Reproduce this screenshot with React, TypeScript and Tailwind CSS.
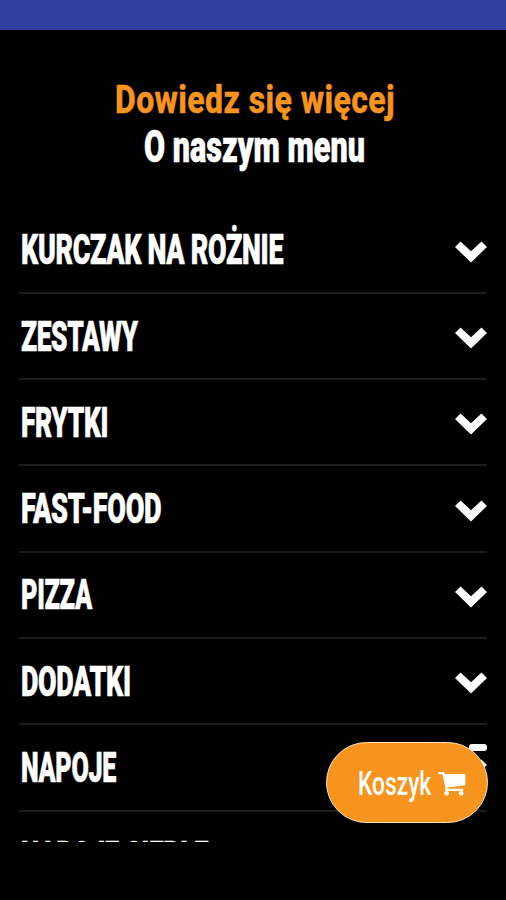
import { useLayoutEffect, useRef, useState } from 'react'

type FitTextProps = {
  text: string
  width: number
  className: string
}

// Condenses a line of text so that it takes exactly the given width.
function FitText({ text, width, className }: FitTextProps) {
  const ref = useRef<HTMLSpanElement>(null)
  const [scale, setScale] = useState(0.6)

  useLayoutEffect(() => {
    if (ref.current) setScale(width / ref.current.offsetWidth)
  }, [width, text])

  return (
    <span className="block" style={{ width }}>
      <span
        ref={ref}
        className={`inline-block origin-left whitespace-nowrap ${className}`}
        style={{ transform: `scaleX(${scale})` }}
      >
        {text}
      </span>
    </span>
  )
}

const categories = [
  { name: 'KURCZAK NA ROŻNIE', width: 262 },
  { name: 'ZESTAWY', width: 117 },
  { name: 'FRYTKI', width: 87 },
  { name: 'FAST-FOOD', width: 140 },
  { name: 'PIZZA', width: 71 },
  { name: 'DODATKI', width: 110 },
  { name: 'NAPOJE', width: 95 },
  { name: 'NAPOJE CIEPŁE', width: 187 },
]

function Chevron() {
  return (
    <svg className="mt-[4px] h-[22px] w-8 shrink-0" viewBox="0 0 32 22" fill="#fff">
      <path d="M5.5 0.5 16 10.2 26.5 0.5 32 6 16 21.5 0 6Z" />
    </svg>
  )
}

function CartIcon() {
  return (
    <svg className="h-6 w-7" viewBox="0 0 28 24" fill="#fff">
      <path d="M0 .8Q0 0 1 0H5.2Q6.4 0 6.8 2H27.3V12.6Q27.3 13.4 26.4 13.5L9.2 15.4 9.4 16.8H25.2V19H7.2L7.4 15.4 4.4 2.3H1Q0 2.3 0 .8Z" />
      <circle cx="8.6" cy="21.3" r="2.4" />
      <circle cx="23.2" cy="21.3" r="2.4" />
    </svg>
  )
}

export default function App() {
  return (
    <div className="relative h-[900px] w-[506px] overflow-hidden bg-black font-['Roboto','Liberation_Sans',sans-serif] text-white">
      <header className="h-[30px] bg-[#303f9f]" />

      <main className="h-[812px] overflow-hidden px-[19px]">
        <div className="flex h-[177.6px] flex-col items-center pt-[46px] pl-[3px]">
          <h1 className="h-12">
            <FitText
              text="Dowiedz się więcej"
              width={280}
              className="text-[38px] leading-[48px] font-extrabold tracking-[0.5px] text-[#f7941d] [-webkit-text-stroke:0.4px_#f7941d]"
            />
          </h1>
          <h2 className="h-12">
            <FitText
              text="O naszym menu"
              width={221}
              className="text-[44px] leading-[47px] font-black [-webkit-text-stroke:0.6px_#fff]"
            />
          </h2>
        </div>

        <ul>
          {categories.map((category, index) => (
            <li
              key={category.name}
              className={`flex h-[86.3px] items-center justify-between border-b-[2px] border-[#1b1b1b] pl-[1.5px] ${
                index === categories.length - 1 ? 'pt-[6px]' : ''
              }`}
            >
              <FitText
                text={category.name}
                width={category.width}
                className="text-[42px] leading-[47px] font-black tracking-[-0.5px] [-webkit-text-stroke:0.6px_#fff]"
              />
              <Chevron />
            </li>
          ))}
        </ul>
      </main>

      <div className="absolute top-[744px] left-[469px] h-[7px] w-[18px] rounded-[3px] bg-white" />

      <button className="absolute top-[742px] left-[326px] flex h-[81px] w-[162px] items-center rounded-full border border-[#fbe3c2] bg-[#f7941d] pl-[31px]">
        <FitText text="Koszyk" width={73} className="text-[34px] leading-[38px] font-medium" />
        <span className="pl-[7px] pt-[2px]">
          <CartIcon />
        </span>
      </button>
    </div>
  )
}
